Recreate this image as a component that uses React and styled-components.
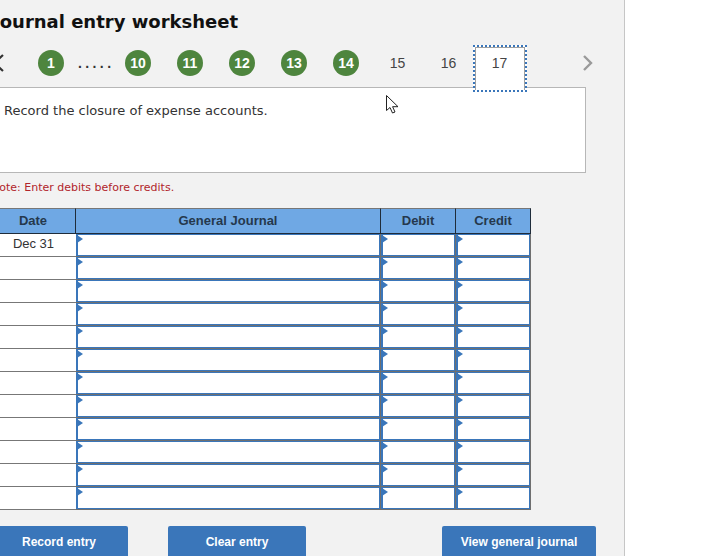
import React from "react";
import styled, { createGlobalStyle } from "styled-components";

const GlobalStyle = createGlobalStyle`
html, body {
  margin: 0;
  padding: 0;
  background: #fff;
  overflow: hidden;
}
`;

const Panel = styled.div`
position: relative;
box-sizing: border-box;
width: 625px;
height: 556px;
overflow: hidden;
background: #f2f2f2;
border-right: 1px solid #c6c6c6;
`;

const Title = styled.h2`
margin: 0 0 0 -7px;
padding-top: 10px;
height: 25px;
font: bold 18px/23px "DejaVu Sans", sans-serif;
color: #111;
white-space: nowrap;
`;

const Nav = styled.div`
display: flex;
align-items: center;
height: 42px;
margin-top: 10px;
`;

const PrevArrow = styled.svg`
width: 25px;
height: 20px;
margin-top: -6px;
flex: none;
`;

const StepSlot = styled.div`
flex: none;
width: ${props => props.$w || 52}px;
display: flex;
justify-content: center;
`;

const Circle = styled.div`
width: 26px;
height: 26px;
margin-top: -7px;
border-radius: 50%;
background: #4e853e;
color: #fff;
font: bold 14px/26px "Liberation Sans", Arial, sans-serif;
text-align: center;
`;

const Dots = styled.div`
flex: none;
width: 35px;
margin-top: -7px;
font: bold 14px/26px "Liberation Sans", Arial, sans-serif;
letter-spacing: 3.4px;
color: #333;
padding-left: 1px;
box-sizing: border-box;
`;

const PlainStep = styled.div`
margin-top: -7px;
font: 14px/26px "Liberation Sans", Arial, sans-serif;
color: #444;
`;

const ActiveStep = styled.div`
position: relative;
z-index: 2;
box-sizing: border-box;
flex: none;
width: 54px;
height: 47px;
margin: 0 0 -4px -1px;
padding-right: 1px;
align-self: flex-start;
background: #fff;
border: 2px dotted #3a76ba;
box-shadow: inset 1px 1px 0 #a0a0a0, inset -1px 0 0 #a0a0a0;
font: 14px/33px "Liberation Sans", Arial, sans-serif;
color: #444;
text-align: center;
`;

const NextArrow = styled.svg`
width: 14px;
height: 20px;
margin: -7px 0 0 54px;
flex: none;
`;

const Prompt = styled.div`
box-sizing: border-box;
width: 587px;
height: 86px;
margin-left: -1px;
padding: 14px 0 0 4px;
background: #fff;
border: 1px solid #b7b7b7;
font: 13px/17px "DejaVu Sans", sans-serif;
color: #333;
`;

const Note = styled.div`
margin: 7px 0 0 -9px;
height: 15px;
font: 11px/15px "DejaVu Sans", sans-serif;
color: #b1252b;
white-space: nowrap;
`;

const Table = styled.div`
width: 540px;
margin: 13px 0 0 -9px;
`;

const Row = styled.div`
display: grid;
grid-template-columns: 85px 305px 75px 75px;
height: ${props => props.$h || 23}px;
`;

const HeadCell = styled.div`
box-sizing: border-box;
background: #6fa8e4;
border-top: 1px solid #777;
border-right: 1px solid #1f2c3a;
border-bottom: 1px solid #1f2c3a;
font: bold 13px/23px "Liberation Sans", Arial, sans-serif;
color: #25384d;
text-align: center;
`;

const DateCell = styled.div`
box-sizing: border-box;
background: #fff;
border-bottom: 1px solid #777;
font: 13px/20px "Liberation Sans", Arial, sans-serif;
color: #333;
text-align: center;
`;

const EntryCell = styled.div`
position: relative;
box-sizing: border-box;
background: #fff;
border-right: 1px solid #6f6f6f;
border-bottom: 1px solid #6f6f6f;
box-shadow: inset 2px 1px 0 #3a76ba, inset -1px -1px 0 #3a76ba;

&::before {
  content: "";
  position: absolute;
  top: 1px;
  left: 1px;
  border-left: 6px solid #3a76ba;
  border-top: 4px solid transparent;
  border-bottom: 4px solid transparent;
}
`;

const Actions = styled.div`
display: flex;
margin: 16px 0 0 -10px;
`;

const ActionButton = styled.div`
flex: none;
box-sizing: border-box;
width: ${props => props.$w}px;
height: 32px;
margin-left: ${props => props.$gap || 0}px;
border-radius: 2px;
background: #3a76ba;
color: #fff;
font: bold 12px/32px "Liberation Sans", Arial, sans-serif;
text-align: center;
`;

const Pointer = styled.svg`
position: absolute;
left: 386px;
top: 95px;
width: 13px;
height: 19px;
`;

const rows = Array.from({ length: 12 }, (_, i) => i);

function App() {
  return (
    <>
      <GlobalStyle />
      <Panel>
        <Title>Journal entry worksheet</Title>
        <Nav>
          <PrevArrow viewBox="0 0 25 20">
            <path d="M3 2 L-6 10 L3 18" fill="none" stroke="#333" strokeWidth="2.2" />
          </PrevArrow>
          <StepSlot><Circle>1</Circle></StepSlot>
          <Dots>.....</Dots>
          <StepSlot><Circle>10</Circle></StepSlot>
          <StepSlot><Circle>11</Circle></StepSlot>
          <StepSlot><Circle>12</Circle></StepSlot>
          <StepSlot><Circle>13</Circle></StepSlot>
          <StepSlot><Circle>14</Circle></StepSlot>
          <StepSlot $w={51}><PlainStep>15</PlainStep></StepSlot>
          <StepSlot $w={51}><PlainStep>16</PlainStep></StepSlot>
          <ActiveStep>17</ActiveStep>
          <NextArrow viewBox="0 0 14 20">
            <path d="M3 3 L10 10 L3 17" fill="none" stroke="#9a9a9a" strokeWidth="2.4" />
          </NextArrow>
        </Nav>
        <Prompt>Record the closure of expense accounts.</Prompt>
        <Note>Note: Enter debits before credits.</Note>
        <Table>
          <Row $h={26}>
            <HeadCell>Date</HeadCell>
            <HeadCell>General Journal</HeadCell>
            <HeadCell>Debit</HeadCell>
            <HeadCell>Credit</HeadCell>
          </Row>
          {rows.map(i => (
            <Row key={i}>
              <DateCell>{i === 0 ? "Dec 31" : ""}</DateCell>
              <EntryCell />
              <EntryCell />
              <EntryCell />
            </Row>
          ))}
        </Table>
        <Actions>
          <ActionButton $w={138}>Record entry</ActionButton>
          <ActionButton $w={138} $gap={40}>Clear entry</ActionButton>
          <ActionButton $w={154} $gap={136}>View general journal</ActionButton>
        </Actions>
        <Pointer viewBox="0 0 13 19">
          <path d="M0.5 0.5 L0.5 15.5 L4 12.5 L6.5 18 L9 17 L6.6 11.7 L12 11.7 Z" fill="#fff" stroke="#222" strokeWidth="1" />
        </Pointer>
      </Panel>
    </>
  );
}

export default App;
